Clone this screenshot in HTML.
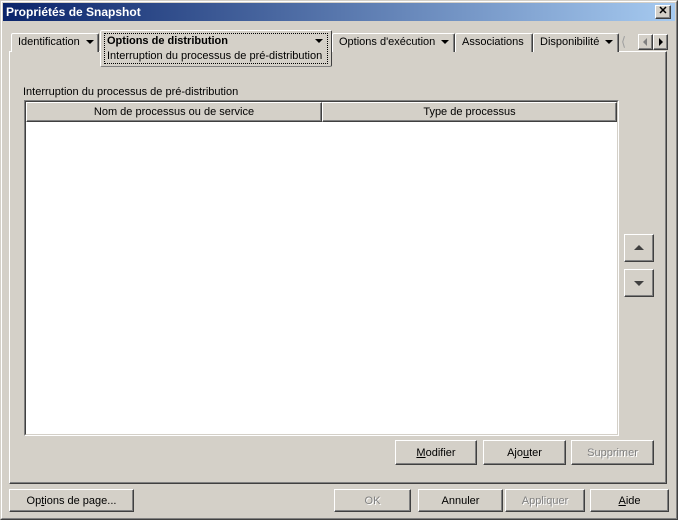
<!DOCTYPE html>
<html><head><meta charset="utf-8"><style>
*{box-sizing:border-box;margin:0;padding:0}
body{width:678px;height:520px;background:#d4d0c8;font:11px "Liberation Sans",Arial,sans-serif;color:#000;position:relative;overflow:hidden}
.a{position:absolute}
.win{left:0;top:0;width:678px;height:520px;border:1px solid;border-color:#d4d0c8 #404040 #404040 #d4d0c8}
.win2{left:1px;top:1px;width:676px;height:518px;border:1px solid;border-color:#fff #808080 #808080 #fff}
.title{left:3px;top:3px;width:672px;height:18px;background:linear-gradient(90deg,#0a246a,#a6caf0);color:#fff;font-weight:bold;font-size:12px;line-height:18px;padding-left:3px}
.close{left:655px;top:5px;width:16px;height:14px;background:#d4d0c8;border:1px solid;border-color:#fff #404040 #404040 #fff;box-shadow:inset -1px -1px #808080;font:bold 11px "Liberation Sans";line-height:11px;text-align:center;color:#000}
.btn{border:1px solid;border-color:#fff #404040 #404040 #fff;box-shadow:inset -1px -1px #808080;text-align:center;line-height:23px;background:#d4d0c8}
.dis{color:#808080;text-shadow:1px 1px #fff}
.panel{left:9px;top:51px;width:658px;height:433px;border:1px solid;border-color:#fff #404040 #404040 #fff;box-shadow:inset -1px -1px #808080}
.tab{top:33px;height:19px;border:1px solid;border-bottom:none;border-color:#fff #404040 #404040 #fff;box-shadow:inset -1px 0 #808080;line-height:17px;padding-left:6px;background:#d4d0c8;border-radius:2px 2px 0 0}
.dn{display:inline-block;width:0;height:0;border-left:4px solid transparent;border-right:4px solid transparent;border-top:4px solid #000;vertical-align:middle;margin-left:6px}
.list{left:24px;top:100px;width:595px;height:336px;border:1px solid;border-color:#808080 #fff #fff #808080;background:#fff}
.list:before{content:"";position:absolute;left:0;top:0;right:0;bottom:0;border:1px solid;border-color:#404040 #d4d0c8 #d4d0c8 #404040}
.hd{top:1px;height:20px;line-height:19px;text-align:center;background:#d4d0c8;border:1px solid;border-color:#fff #404040 #404040 #fff;box-shadow:inset -1px -1px #808080}
u{text-decoration:underline}
</style></head><body>
<div class="a win"></div><div class="a win2"></div>
<div class="a title">Propriétés de Snapshot</div>
<div class="a close">✕</div>

<div class="a panel"></div>
<div class="a tab" style="left:11px;width:88px">Identification<span class="dn"></span></div>
<div class="a tab" style="left:332px;width:123px">Options d'exécution<span class="dn"></span></div>
<div class="a tab" style="left:455px;width:78px">Associations</div>
<div class="a tab" style="left:533px;width:86px">Disponibilité<span class="dn"></span></div>
<div class="a" style="left:621px;top:34px;width:12px;height:17px;color:#a0a0a0;font-size:13px;line-height:15px">⟨</div>
<div class="a btn" style="left:638px;top:34px;width:15px;height:16px"><span class="a" style="left:4px;top:3px;border-top:4px solid transparent;border-bottom:4px solid transparent;border-right:4px solid #808080"></span></div>
<div class="a btn" style="left:653px;top:34px;width:15px;height:16px"><span class="a" style="left:5px;top:3px;border-top:4px solid transparent;border-bottom:4px solid transparent;border-left:4px solid #000"></span></div>
<div class="a" style="left:100px;top:30px;width:232px;height:37px;background:#d4d0c8;border:1px solid;border-color:#fff #404040 #808080 #fff;border-radius:2px"></div>
<div class="a" style="left:104px;top:33px;width:224px;height:31px;border:1px dotted #000"></div>
<div class="a" style="left:107px;top:35px;font-weight:bold;width:220px">Options de distribution<span class="a" style="right:4px;top:4px;border-left:4px solid transparent;border-right:4px solid transparent;border-top:4px solid #000"></span></div>
<div class="a" style="left:107px;top:50px">Interruption du processus de pré-distribution</div>

<div class="a" style="left:23px;top:86px">Interruption du processus de pré-distribution</div>
<div class="a list">
 <div class="a hd" style="left:1px;width:296px">Nom de processus ou de service</div>
 <div class="a hd" style="left:297px;width:295px">Type de processus</div>
</div>

<div class="a btn" style="left:624px;top:234px;width:30px;height:28px"><span class="a" style="left:9px;top:10px;border-left:5px solid transparent;border-right:5px solid transparent;border-bottom:5px solid #404040"></span></div>
<div class="a btn" style="left:624px;top:269px;width:30px;height:28px"><span class="a" style="left:9px;top:11px;border-left:5px solid transparent;border-right:5px solid transparent;border-top:5px solid #404040"></span></div>

<div class="a btn" style="left:395px;top:440px;width:82px;height:25px;line-height:25px"><u>M</u>odifier</div>
<div class="a btn" style="left:483px;top:440px;width:83px;height:25px;line-height:25px">Ajo<u>u</u>ter</div>
<div class="a btn dis" style="left:571px;top:440px;width:83px;height:25px;line-height:25px">Supprimer</div>

<div class="a btn" style="left:9px;top:489px;width:125px;height:23px">Op<u>t</u>ions de page...</div>
<div class="a btn dis" style="left:334px;top:489px;width:77px;height:23px">OK</div>
<div class="a btn" style="left:418px;top:489px;width:85px;height:23px">Annuler</div>
<div class="a btn dis" style="left:505px;top:489px;width:80px;height:23px">Appliquer</div>
<div class="a btn" style="left:590px;top:489px;width:79px;height:23px"><u>A</u>ide</div>
</body></html>
